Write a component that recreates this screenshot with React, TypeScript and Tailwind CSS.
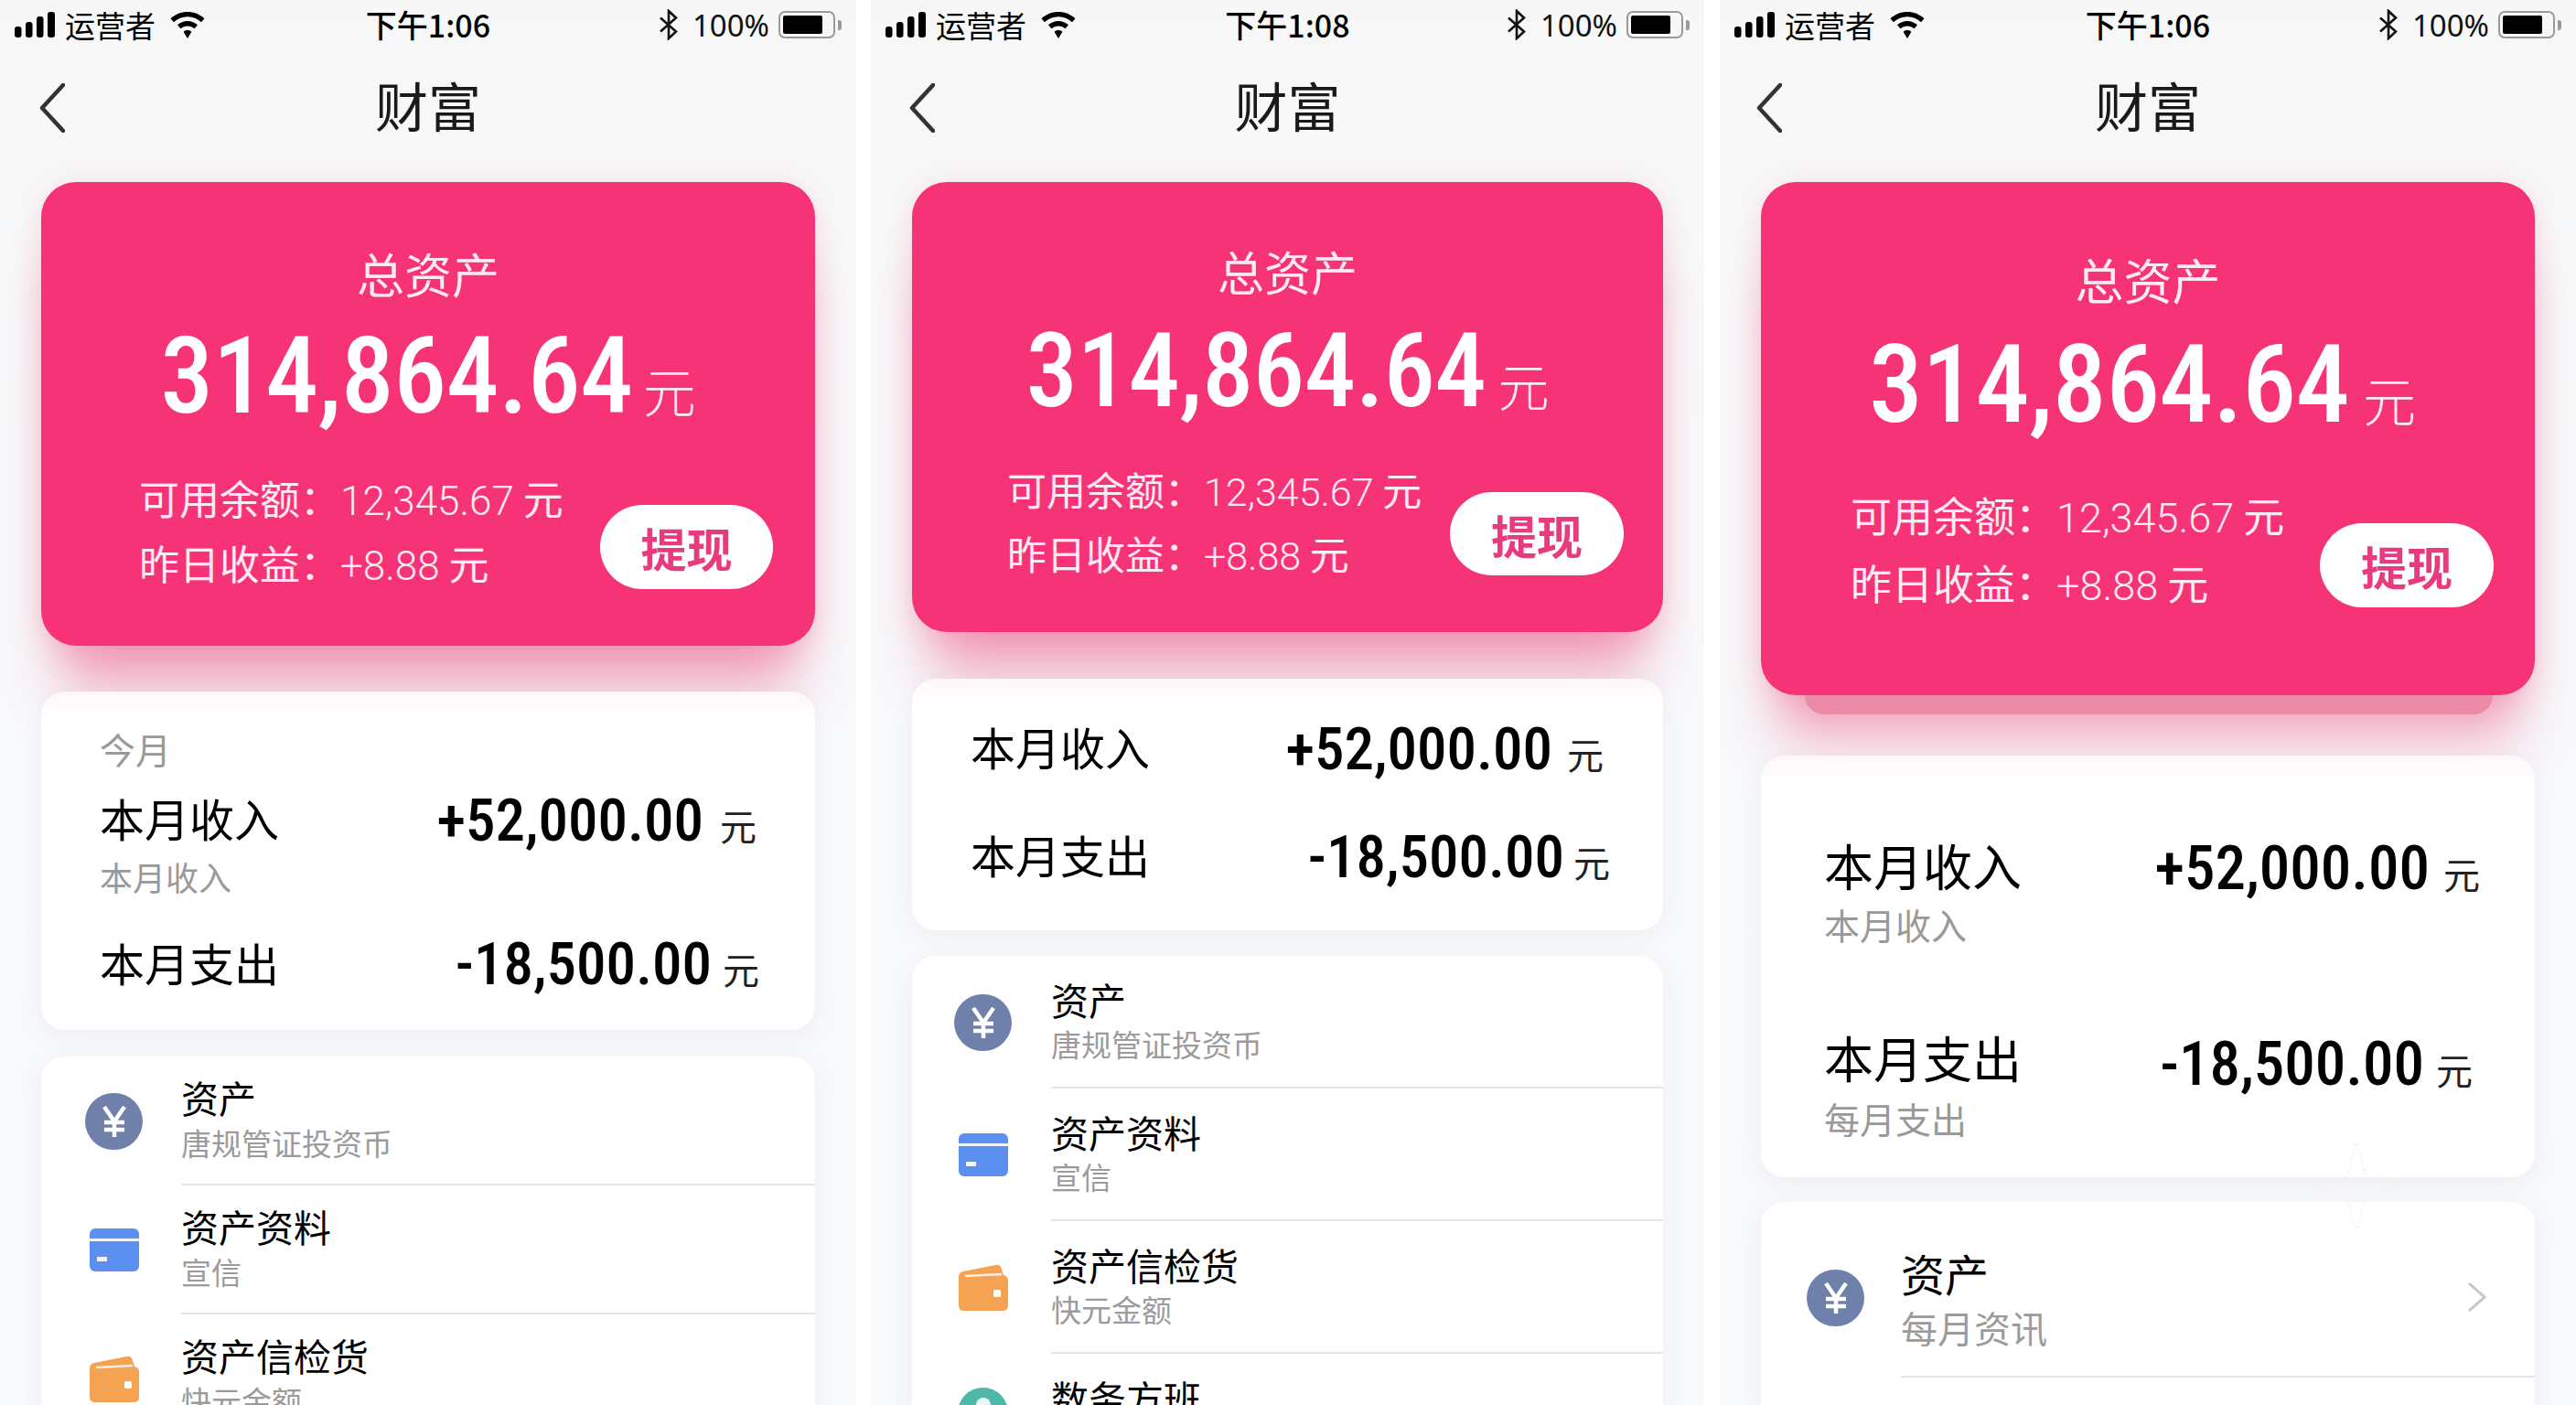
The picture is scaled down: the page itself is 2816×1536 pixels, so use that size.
import type { ReactNode } from 'react'

const cjk = "font-['Noto_Sans_CJK_SC','Noto_Sans',sans-serif]"
const num = "font-['Roboto','Noto_Sans_CJK_SC',sans-serif] [font-stretch:75%]"
const heroNum = "font-['Roboto','Noto_Sans_CJK_SC',sans-serif] [font-stretch:75%] tracking-[-0.005em]"
const detailNum = "font-['Roboto','Noto_Sans_CJK_SC',sans-serif] font-light"

function Signal() {
  return (
    <svg width="46" height="28" viewBox="0 0 46 28" fill="#000">
      <rect x="0" y="16" width="7.5" height="12" rx="3" />
      <rect x="12" y="11" width="7.5" height="17" rx="3" />
      <rect x="24" y="5" width="7.5" height="23" rx="3" />
      <rect x="36" y="0" width="8" height="28" rx="3" />
    </svg>
  )
}

function Wifi() {
  return (
    <svg width="38" height="29" viewBox="0 0 38 29" fill="#000">
      <path d="M19 0C12 0 5.500 2.600 0.500 7.200L4 11.200C8 7.500 13.300 5.300 19 5.300S30 7.500 34 11.200L37.500 7.200C32.500 2.600 26 0 19 0Z" />
      <path d="M19 10C14.800 10 11 11.600 8 14.300L11.500 18.300C13.500 16.500 16.100 15.400 19 15.400S24.500 16.500 26.500 18.300L30 14.300C27 11.600 23.200 10 19 10Z" />
      <path d="M19 20C17.300 20 15.800 20.600 14.600 21.700L19 29L23.400 21.700C22.200 20.600 20.700 20 19 20Z" />
    </svg>
  )
}

function Bluetooth() {
  return (
    <svg width="20" height="34" viewBox="0 0 20 34" fill="none" stroke="#111" strokeWidth="2.600">
      <path d="M1 9.500L18 24.500L10 32V2L18 9.500L1 24.500" />
    </svg>
  )
}

function Battery() {
  return (
    <div className="flex items-center gap-[3px]">
      <div className="w-[62px] h-[30px] rounded-[7px] border-2 border-[#9a9a9a] p-[3px]">
        <div className="w-[43px] h-full rounded-[2px] bg-black" />
      </div>
      <div className="w-[4px] h-[11px] rounded-r-[3px] bg-[#9a9a9a]" />
    </div>
  )
}

function StatusBar({ time }: { time: string }) {
  return (
    <div className={`h-[54px] px-[16px] grid grid-cols-3 items-center text-black ${cjk}`}>
      <div className="flex items-center">
        <Signal />
        <span className="ml-[9px] text-[33px] leading-none">运营者</span>
        <span className="ml-[16px]">
          <Wifi />
        </span>
      </div>
      <div className="text-center text-[34px] leading-none font-medium">{time}</div>
      <div className="flex items-center justify-end">
        <Bluetooth />
        <span className="ml-[16px] mr-[10px] text-[33px] leading-none font-['Noto_Sans',sans-serif] text-[#111]">100%</span>
        <Battery />
      </div>
    </div>
  )
}

function NavBar({ backClass }: { backClass: string }) {
  return (
    <div className="relative h-[126px] mb-[19px] flex items-center justify-center">
      <svg className={`absolute top-[37px] ${backClass}`} width="28" height="54" viewBox="0 0 28 54" fill="none" stroke="#333" strokeWidth="4.500" strokeLinecap="round" strokeLinejoin="round">
        <path d="M26 2L3 27L26 52" />
      </svg>
      <span className={`mb-[6px] text-[58px] leading-none text-[#1a1a1a] ${cjk}`}>财富</span>
    </div>
  )
}

function YenIcon() {
  return (
    <div className="w-[63px] h-[62px] rounded-full bg-[#6f80ab] flex items-center justify-center">
      <svg width="28" height="34" viewBox="0 0 28 34" fill="none" stroke="#fff" strokeWidth="4.500">
        <path d="M3 1L14 17L25 1M14 17V34M3 18H25M3 26H25" />
      </svg>
    </div>
  )
}

function CardIcon() {
  return (
    <div className="w-[54px] h-[47px] rounded-[6px] bg-[#5b8ff0] flex flex-col">
      <div className="h-[3px] mt-[11px] bg-white/90" />
      <div className="w-[11px] h-[5px] mt-[17px] ml-[8px] bg-white/90" />
    </div>
  )
}

function WalletIcon() {
  return (
    <svg width="54" height="51" viewBox="0 0 54 51">
      <path d="M0 14Q0 9 5 8L40 1Q45 0 46.500 4L49 12Q54 13 54 18V45Q54 51 48 51H6Q0 51 0 45Z" fill="#f5a253" />
      <path d="M7 13L47 11" stroke="#fdeee0" strokeWidth="2.500" />
      <rect x="38" y="28" width="8" height="8" rx="1.500" fill="#fff" />
    </svg>
  )
}

function TealIcon() {
  return (
    <div className="w-[55px] h-[55px] mb-[16px] rounded-full bg-[#4db8a8] flex justify-center pt-[11px]">
      <div className="w-[16px] h-[16px] rounded-t-full bg-white/90" />
    </div>
  )
}

type MoneyProps = {
  value: string
  sizeClass: string
  unitClass: string
}

function Money({ value, sizeClass, unitClass }: MoneyProps) {
  return (
    <div className="flex items-baseline">
      <span className={`${num} font-medium text-black ${sizeClass}`}>{value}</span>
      <span className={`${cjk} text-[#222] ${unitClass}`}>元</span>
    </div>
  )
}

type HeroProps = {
  boxClass: string
  labelClass: string
  amountClass: string
  unitClass: string
  rowClass: string
  lineClass: string
  detailClass: string
  buttonClass: string
  ghost?: boolean
}

function Hero({ boxClass, labelClass, amountClass, unitClass, rowClass, lineClass, detailClass, buttonClass, ghost }: HeroProps) {
  return (
    <div className="relative">
      <div className={`relative rounded-[38px] bg-[#f53376] text-white shadow-[0_64px_60px_-20px_rgba(232,60,110,0.47),0_4px_30px_rgba(245,51,118,0.16)] ${boxClass}`}>
        <div className={`text-center text-white/90 ${cjk} ${labelClass}`}>总资产</div>
        <div className="flex items-baseline justify-center">
          <span className={`${heroNum} font-medium ${amountClass}`}>314,864.64</span>
          <span className={`${cjk} font-light text-white/90 ${unitClass}`}>元</span>
        </div>
        <div className={`flex justify-between ${rowClass}`}>
          <div className={`text-white/90 ${cjk} ${detailClass}`}>
            <div className={lineClass}>
              可用余额：<span className={detailNum}>12,345.67</span> 元
            </div>
            <div className={lineClass}>
              昨日收益：<span className={detailNum}>+8.88</span> 元
            </div>
          </div>
          <button className={`rounded-full bg-white text-[#e83a7e] font-bold text-[50px] leading-none ${cjk} ${buttonClass}`}>提现</button>
        </div>
      </div>
      {ghost && <div className="absolute left-[48px] right-[46px] -bottom-[21px] h-[21px] rounded-b-[21px] bg-[#ec8aa8]" />}
    </div>
  )
}

type ItemProps = {
  icon: ReactNode
  title: string
  sub: string
  rowClass: string
  iconClass: string
  textClass: string
  titleClass: string
  subClass: string
  chevron?: boolean
}

function ListItem({ icon, title, sub, rowClass, iconClass, textClass, titleClass, subClass, chevron }: ItemProps) {
  return (
    <div className={`flex ${rowClass}`}>
      <div className={`shrink-0 flex items-center justify-center ${iconClass}`}>{icon}</div>
      <div className="flex-1 flex items-center justify-between border-b-2 border-[#e6e6e6]">
        <div className={`${cjk} ${textClass}`}>
          <div className={`text-black ${titleClass}`}>{title}</div>
          <div className={`text-[#9b9b9b] min-h-[36px] ${subClass}`}>{sub}</div>
        </div>
        {chevron && (
          <svg className="mr-[52px]" width="22" height="34" viewBox="0 0 22 34" fill="none" stroke="#c6c6c6" strokeWidth="3">
            <path d="M2 2L19 17L2 32" />
          </svg>
        )}
      </div>
    </div>
  )
}

const whiteCard = 'rounded-[26px] bg-white shadow-[0_6px_24px_rgba(90,100,130,0.07)]'
const monthCard = 'relative rounded-[26px] bg-[linear-gradient(#fef7f9,#ffffff_32px)] shadow-[0_6px_24px_rgba(90,100,130,0.07)]'
const phoneBg = 'overflow-hidden bg-gradient-to-b from-[#f7f7f7] to-[#f8f9fb] to-[30%]'

function PhoneOne() {
  const item = {
    rowClass: 'h-[141px]',
    iconClass: 'w-[153px] pl-[6px]',
    textClass: 'mb-[8px]',
    titleClass: 'text-[41px] leading-[50px]',
    subClass: 'text-[33px] leading-[36px] mt-[7px]',
  }
  return (
    <div className={`w-[936px] h-full shrink-0 ${phoneBg}`}>
      <StatusBar time="下午1:06" />
      <NavBar backClass="left-[43px]" />
      <div className="px-[45px]">
        <Hero
          boxClass="h-[507px] pt-[70px]"
          labelClass="text-[52px] leading-[60px]"
          amountClass="text-[116px] leading-[120px] mt-[22px]"
          unitClass="text-[58px] leading-none ml-[11px]"
          rowClass="mt-[38px] pl-[107px] pr-[46px]"
          lineClass="h-[71px] leading-[71px]"
          detailClass="text-[44px]"
          buttonClass="w-[189px] h-[92px] mt-[43px]"
        />
        <div className={`mt-[50px] h-[370px] pt-[40px] px-[64px] ${monthCard} ${cjk}`}>
          <div className="text-[39px] leading-[44px] text-[#999]">今月</div>
          <div className="mt-[28px] flex justify-between items-center h-[60px]">
            <span className="mb-[8px] text-[49px] text-black">本月收入</span>
            <Money value="+52,000.00" sizeClass="text-[65px]" unitClass="text-[40px] ml-[18px]" />
          </div>
          <div className="mt-[10px] text-[36px] leading-[40px] text-[#999]">本月收入</div>
          <div className="mt-[47px] -mr-[3px] flex justify-between items-center h-[60px]">
            <span className="mb-[6px] text-[49px] text-black">本月支出</span>
            <Money value="-18,500.00" sizeClass="text-[65px]" unitClass="text-[40px] ml-[12px]" />
          </div>
        </div>
        <div className={`mt-[29px] h-[500px] overflow-hidden ${whiteCard}`}>
          <ListItem {...item} icon={<YenIcon />} title="资产" sub="唐规管证投资币" />
          <ListItem {...item} icon={<CardIcon />} title="资产资料" sub="宣信" />
          <ListItem {...item} icon={<WalletIcon />} title="资产信检货" sub="快元金额" />
        </div>
      </div>
    </div>
  )
}

function PhoneTwo() {
  const item = {
    rowClass: 'h-[145px]',
    iconClass: 'w-[152px] pl-[3px]',
    textClass: 'mb-[8px]',
    titleClass: 'text-[41px] leading-[50px]',
    subClass: 'text-[33px] leading-[36px] mt-[6px]',
  }
  return (
    <div className={`w-[911px] h-full ml-[16px] shrink-0 ${phoneBg}`}>
      <StatusBar time="下午1:08" />
      <NavBar backClass="left-[42px]" />
      <div className="px-[45px]">
        <Hero
          boxClass="h-[492px] pt-[67px]"
          labelClass="text-[51px] leading-[60px]"
          amountClass="text-[113px] leading-[120px] mt-[20px]"
          unitClass="text-[56px] leading-none ml-[13px]"
          rowClass="mt-[33px] pl-[104px] pr-[43px]"
          lineClass="h-[70px] leading-[70px]"
          detailClass="text-[43px]"
          buttonClass="w-[190px] h-[91px] mt-[39px]"
        />
        <div className={`mt-[51px] h-[275px] pt-[48px] pl-[64px] pr-[61px] ${monthCard} ${cjk}`}>
          <div className="mr-[4px] flex justify-between items-center h-[60px]">
            <span className="mb-[8px] text-[49px] text-black">本月收入</span>
            <Money value="+52,000.00" sizeClass="text-[65px]" unitClass="text-[40px] ml-[16px]" />
          </div>
          <div className="mt-[58px] -mr-[3px] flex justify-between items-center h-[60px]">
            <span className="mb-[8px] text-[49px] text-black">本月支出</span>
            <Money value="-18,500.00" sizeClass="text-[65px]" unitClass="text-[40px] ml-[10px]" />
          </div>
        </div>
        <div className={`mt-[28px] h-[600px] overflow-hidden ${whiteCard}`}>
          <ListItem {...item} icon={<YenIcon />} title="资产" sub="唐规管证投资币" />
          <ListItem {...item} icon={<CardIcon />} title="资产资料" sub="宣信" />
          <ListItem {...item} icon={<WalletIcon />} title="资产信检货" sub="快元金额" />
          <ListItem {...item} icon={<TealIcon />} title="数务方班" sub="" />
        </div>
      </div>
    </div>
  )
}

function PhoneThree() {
  return (
    <div className={`w-[936px] h-full ml-[17px] shrink-0 ${phoneBg}`}>
      <StatusBar time="下午1:06" />
      <NavBar backClass="left-[40px]" />
      <div className="px-[45px]">
        <Hero
          ghost
          boxClass="h-[561px] pt-[73px]"
          labelClass="text-[53px] leading-[66px]"
          amountClass="text-[118px] leading-[120px] mt-[23px]"
          unitClass="text-[58px] leading-none ml-[15px] mr-[12px]"
          rowClass="mt-[45px] pl-[98px] pr-[45px]"
          lineClass="h-[74px] leading-[74px]"
          detailClass="text-[45px]"
          buttonClass="w-[190px] h-[92px] mt-[46px]"
        />
        <div className={`mt-[66px] h-[461px] pt-[88px] pl-[69px] pr-[60px] ${monthCard} ${cjk}`}>
          <div className="flex justify-between items-center h-[70px]">
            <span className="mb-[8px] text-[54px] text-black">本月收入</span>
            <Money value="+52,000.00" sizeClass="text-[67px]" unitClass="text-[40px] ml-[15px]" />
          </div>
          <div className="mt-[4px] text-[39px] leading-[44px] text-[#999]">本月收入</div>
          <div className="mt-[96px] mr-[8px] flex justify-between items-center h-[70px]">
            <span className="mb-[16px] text-[54px] text-black">本月支出</span>
            <Money value="-18,500.00" sizeClass="text-[67px]" unitClass="text-[40px] ml-[13px]" />
          </div>
          <div className="mt-[2px] text-[39px] leading-[44px] text-[#999]">每月支出</div>
          <svg className="absolute left-[603px] top-[423px]" width="96" height="96" viewBox="0 0 98 98" fill="none" stroke="#eff0f4" strokeWidth="1.500" strokeDasharray="2 3">
            <path d="M49 1L60 38L97 49L60 60L49 97L38 60L1 49L38 38Z" />
          </svg>
        </div>
        <div className={`mt-[27px] h-[400px] overflow-hidden ${whiteCard}`}>
          <ListItem
            icon={<YenIcon />}
            title="资产"
            sub="每月资讯"
            chevron
            rowClass="h-[192px] pt-[18px]"
            iconClass="w-[153px] pl-[10px]"
            textClass=""
            titleClass="text-[48px] leading-[56px]"
            subClass="text-[40px] leading-[44px] mt-[10px]"
          />
        </div>
      </div>
    </div>
  )
}

export default function App() {
  return (
    <div className="flex w-[2816px] h-[1536px] overflow-hidden bg-white">
      <PhoneOne />
      <PhoneTwo />
      <PhoneThree />
    </div>
  )
}
